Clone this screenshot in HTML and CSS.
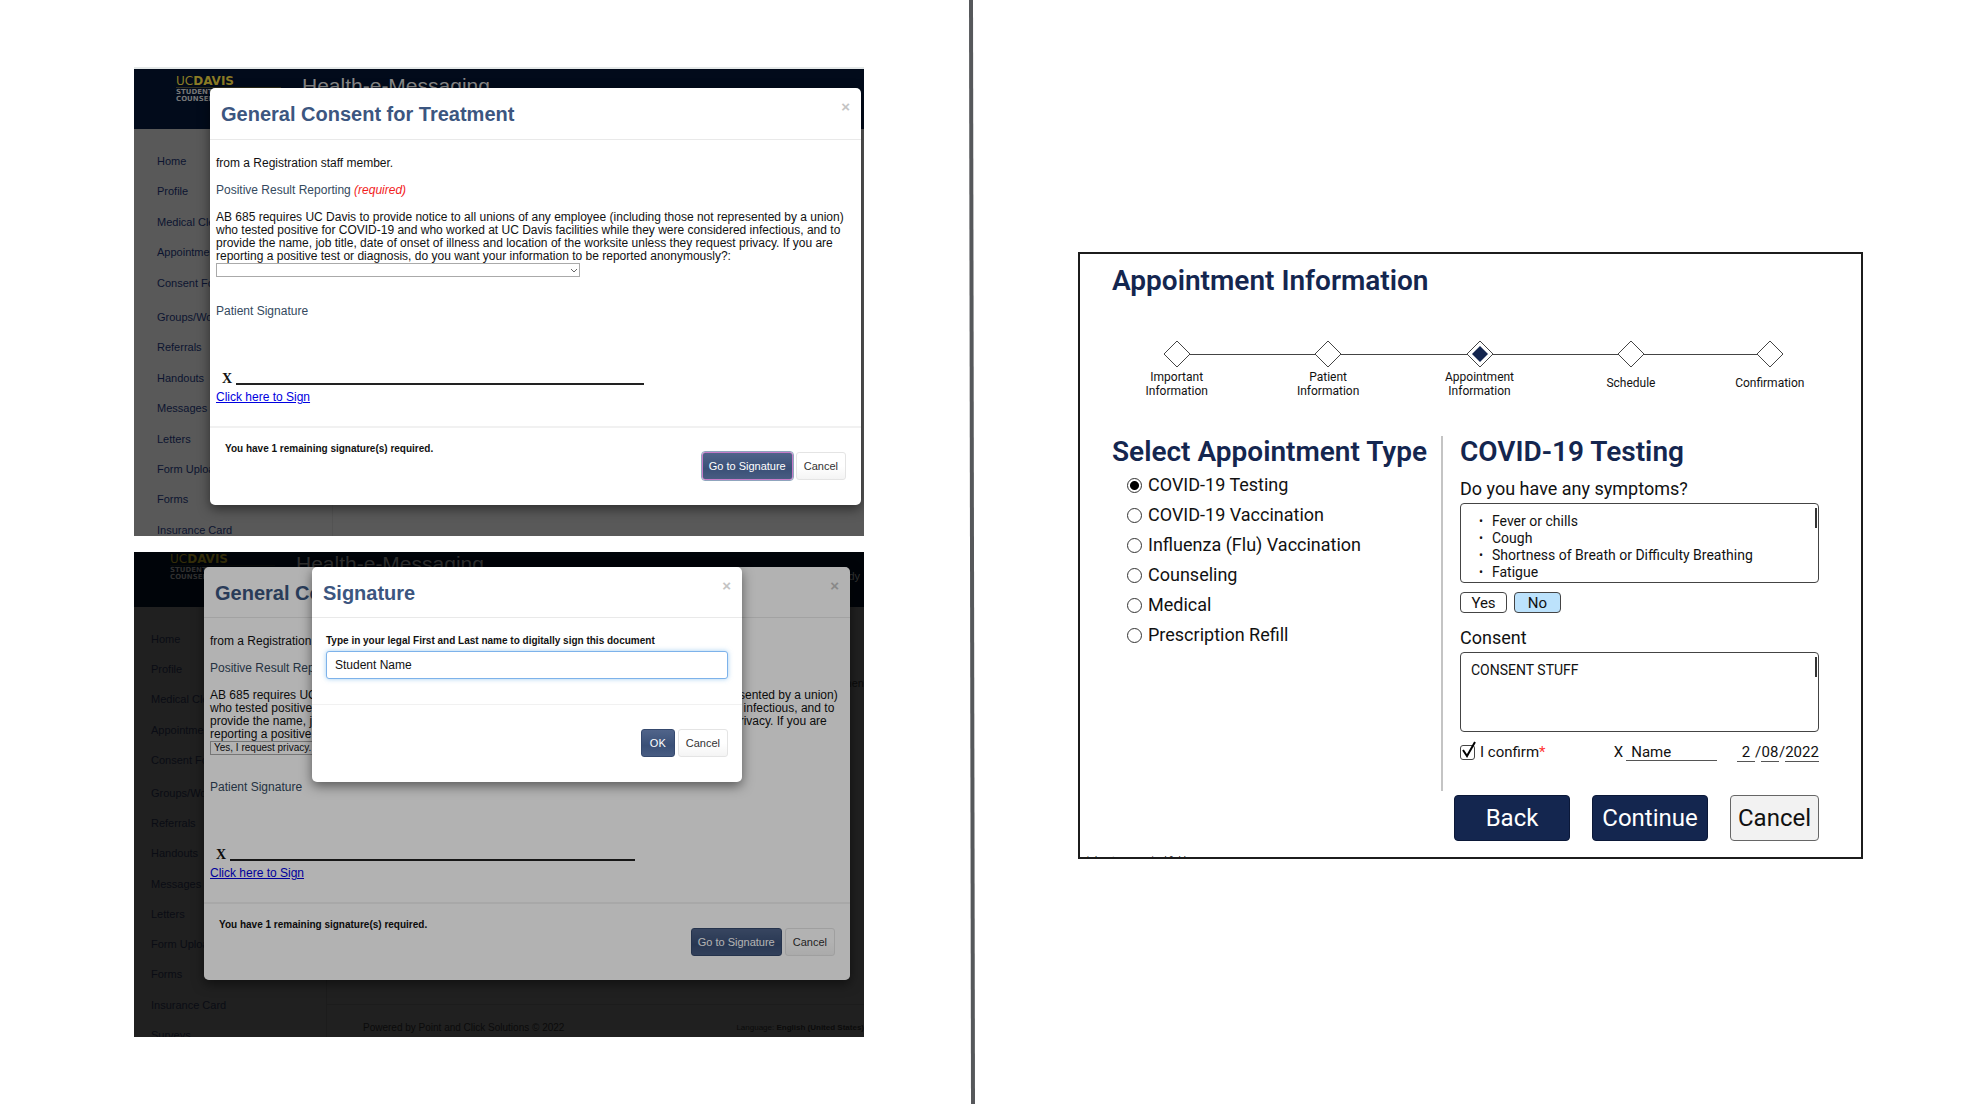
FILE: index.html
```html
<!DOCTYPE html>
<html lang="en">
<head>
<meta charset="utf-8">
<meta name="viewport" content="width=device-width, initial-scale=1">
<title>Appointment flow comparison</title>
<link rel="stylesheet" href="styles.css">
</head>
<body>
<main class="compare">
  <section class="before">

    <div class="shot">
      <div class="app">
        <header class="app-bar">
          <div class="logo"><div class="logo-name">UC<b>DAVIS</b></div><div class="logo-sub">STUDENT<br>COUNSEL</div></div>
          <div class="app-title">Health-e-Messaging</div>
        </header>
        <div class="app-body">
          <nav class="side">
            <ul class="side-top"><li>Home</li><li>Profile</li><li>Medical Clearances</li><li>Appointments</li><li>Consent Forms</li></ul>
            <ul class="side-more"><li>Groups/Workshops</li><li>Referrals</li><li>Handouts</li><li>Messages</li><li>Letters</li><li>Form Upload</li><li>Forms</li><li>Insurance Card</li></ul>
          </nav>
          <div class="app-content"></div>
        </div>
      </div>
      <div class="modal consent">
        <header class="modal-head"><h2>General Consent for Treatment</h2><button class="close" type="button" aria-label="Close">×</button></header>
        <div class="modal-body">
          <p>from a Registration staff member.</p>
          <p class="topic">Positive Result Reporting <em>(required)</em></p>
          <label for="anon1">AB 685 requires UC Davis to provide notice to all unions of any employee (including those not represented by a union)<br>who tested positive for COVID-19 and who worked at UC Davis facilities while they were considered infectious, and to<br>provide the name, job title, date of onset of illness and location of the worksite unless they request privacy. If you are<br>reporting a positive test or diagnosis, do you want your information to be reported anonymously?:</label>
          <div class="select"><select id="anon1"><option></option></select><svg viewBox="0 0 8 5"><path d="M1 1l3 3 3-3"/></svg></div>
          <p class="topic patient">Patient Signature</p>
          <div class="sign-line"><span>X</span><i></i></div>
          <a href="#sign">Click here to Sign</a>
        </div>
        <footer class="modal-foot"><strong>You have 1 remaining signature(s) required.</strong><div class="actions"><button class="btn primary focused" type="button">Go to Signature</button><button class="btn" type="button">Cancel</button></div></footer>
      </div>
    </div>

    <div class="shot dim">
      <div class="app">
        <header class="app-bar">
          <div class="logo"><div class="logo-name">UC<b>DAVIS</b></div><div class="logo-sub">STUDENT<br>COUNSEL</div></div>
          <div class="app-title">Health-e-Messaging</div>
          <div class="user">dy</div>
        </header>
        <div class="app-body">
          <nav class="side">
            <ul class="side-top"><li>Home</li><li>Profile</li><li>Medical Clearances</li><li>Appointments</li><li>Consent Forms</li></ul>
            <ul class="side-more"><li>Groups/Workshops</li><li>Referrals</li><li>Handouts</li><li>Messages</li><li>Letters</li><li>Form Upload</li><li>Forms</li><li>Insurance Card</li><li>Surveys</li></ul>
          </nav>
          <div class="app-content"><div class="app-tab">men</div><div class="app-foot"><span>Powered by Point and Click Solutions © 2022</span><span class="lang">Language: <b>English (United States)</b></span></div></div>
        </div>
      </div>
      <div class="modal consent">
        <header class="modal-head"><h2>General Consent for Treatment</h2><button class="close" type="button" aria-label="Close">×</button></header>
        <div class="modal-body">
          <p>from a Registration staff member.</p>
          <p class="topic">Positive Result Reporting <em>(required)</em></p>
          <label for="anon2">AB 685 requires UC Davis to provide notice to all unions of any employee (including those not represented by a union)<br>who tested positive for COVID-19 and who worked at UC Davis facilities while they were considered infectious, and to<br>provide the name, job title, date of onset of illness and location of the worksite unless they request privacy. If you are<br>reporting a positive test or diagnosis, do you want your information to be reported anonymously?:</label>
          <div class="select"><select id="anon2"><option>Yes, I request privacy. Please report anonymously.</option></select></div>
          <p class="topic patient">Patient Signature</p>
          <div class="sign-line"><span>X</span><i></i></div>
          <a href="#sign">Click here to Sign</a>
        </div>
        <footer class="modal-foot"><strong>You have 1 remaining signature(s) required.</strong><div class="actions"><button class="btn primary" type="button">Go to Signature</button><button class="btn" type="button">Cancel</button></div></footer>
        <div class="veil"></div>
      </div>
      <div class="modal signature">
        <header class="modal-head"><h2>Signature</h2><button class="close" type="button" aria-label="Close">×</button></header>
        <div class="modal-body">
          <label for="legal">Type in your legal First and Last name to digitally sign this document</label>
          <input id="legal" type="text" value="Student Name">
        </div>
        <footer class="modal-foot"><div class="actions"><button class="btn primary" type="button">OK</button><button class="btn" type="button">Cancel</button></div></footer>
      </div>
    </div>

  </section>

  <svg class="rule" viewBox="0 0 8 100" preserveAspectRatio="none"><polygon points="1,0 5,0 7,100 3,100"/></svg>

  <section class="after">
    <form class="card">
      <h1>Appointment Information</h1>
      <ol class="steps">
        <li><svg viewBox="0 0 28 28"><path d="M14 1L27 14 14 27 1 14z"/></svg><span>Important<br>Information</span></li>
        <li><svg viewBox="0 0 28 28"><path d="M14 1L27 14 14 27 1 14z"/></svg><span>Patient<br>Information</span></li>
        <li><svg viewBox="0 0 28 28"><path d="M14 1L27 14 14 27 1 14z"/><path class="fill" d="M14 6L22 14 14 22 6 14z"/></svg><span>Appointment<br>Information</span></li>
        <li class="single"><svg viewBox="0 0 28 28"><path d="M14 1L27 14 14 27 1 14z"/></svg><span>Schedule</span></li>
        <li class="single"><svg viewBox="0 0 28 28"><path d="M14 1L27 14 14 27 1 14z"/></svg><span>Confirmation</span></li>
      </ol>
      <div class="columns">
        <fieldset class="types">
          <legend>Select Appointment Type</legend>
          <label><input type="radio" name="type" checked>COVID-19 Testing</label>
          <label><input type="radio" name="type">COVID-19 Vaccination</label>
          <label><input type="radio" name="type">Influenza (Flu) Vaccination</label>
          <label><input type="radio" name="type">Counseling</label>
          <label><input type="radio" name="type">Medical</label>
          <label><input type="radio" name="type">Prescription Refill</label>
        </fieldset>
        <div class="detail">
          <h2>COVID-19 Testing</h2>
          <h3>Do you have any symptoms?</h3>
          <div class="box"><ul><li>Fever or chills</li><li>Cough</li><li>Shortness of Breath or Difficulty Breathing</li><li>Fatigue</li></ul></div>
          <div class="answers"><button type="button">Yes</button><button type="button" class="on">No</button></div>
          <h3>Consent</h3>
          <div class="box"><p>CONSENT STUFF</p></div>
          <div class="confirm">
            <label class="tick"><input type="checkbox" checked><svg viewBox="0 0 18 20"><path d="M3 10l4 6L15 2"/></svg><span>I confirm<em>*</em></span></label>
            <label class="name"><span>X</span><input type="text" value="Name"></label>
            <div class="date"><input type="text" aria-label="Month" value="2"><span>/</span><input type="text" aria-label="Day" value="08"><span>/</span><input class="year" type="text" aria-label="Year" value="2022"></div>
          </div>
        </div>
      </div>
      <div class="nav-buttons"><button type="button">Back</button><button type="button">Continue</button><button type="button" class="cancel">Cancel</button></div>
      <div class="note">* denotes a required field</div>
    </form>
  </section>
</main>
</body>
</html>
```
FILE: styles.css
```css
* { box-sizing: border-box; }
body { margin: 0; background: #fff; color: #111; font-family: "Liberation Sans", Arial, sans-serif; }
h1, h2, h3, p, ul, ol { margin: 0; padding: 0; }
ul, ol { list-style: none; }
button, input, select { font: inherit; color: inherit; }

.compare { display: grid; grid-template-columns: 968fr 8px 990fr; min-height: 100vh; }
.rule { width: 8px; height: 100%; fill: #56585b; }

/* Existing portal */
.before { display: flex; flex-direction: column; gap: 16px; padding: 67px 104px 66px 134px; }
.shot { position: relative; overflow: hidden; padding: 19px 3px 31px 76px; border-top: 2px solid #e4e8e8; font-size: 12px; line-height: 13px; }
.app { position: absolute; inset: 0; display: flex; flex-direction: column; background: #595959; color: #0c1430; }
.app-bar { position: relative; display: flex; flex: none; height: 60px; padding: 6px 0 0 42px; background: #020b1b; }
.logo { width: 126px; color: #8b7b25; }
.logo-name { width: 105px; border-bottom: 1px solid #2f2d1c; font: 12px/12px "DejaVu Sans", sans-serif; }
.logo-name b { font-weight: bold; }
.logo-sub { padding-top: 1px; color: #777; font: bold 7px/7px "DejaVu Sans", sans-serif; }
.app-title { color: #888; font-size: 21px; line-height: 22px; }
.user { position: absolute; right: 4px; top: 18px; font-size: 11px; color: #333; }
.app-body { flex: 1; display: grid; grid-template: minmax(0, 1fr) / 199px 1fr; min-height: 0; }
.side { padding: 17px 0 0 23px; border-right: 1px solid #535353; font-size: 11px; line-height: 30px; white-space: nowrap; }
.side ul { display: grid; grid-auto-rows: 1fr; }
.side-top { height: 152px; }
.side-more { height: 243px; margin-top: 4px; }
.app-content { display: flex; flex-direction: column; justify-content: space-between; min-width: 0; }

.modal { position: relative; background: #fff; border-radius: 5px; box-shadow: 0 4px 12px rgba(0, 0, 0, .5); }
.modal-head { display: flex; justify-content: space-between; height: 52px; padding: 14px 11px 0; border-bottom: 1px solid #e9e9e9; }
.modal-head h2 { color: #3c5680; font-size: 20px; line-height: 24px; }
.close { align-self: flex-start; padding: 0; border: 0; background: none; color: #c4c4c4; font-size: 15px; line-height: 10px; font-weight: bold; }
.modal-body { padding: 17px 6px 22px; color: #111; white-space: nowrap; }
.modal-body p { margin-bottom: 14px; }
.modal-body label { display: block; }
.modal-body .topic { color: #34495e; }
.topic em { color: #f21d1d; }
.select { position: relative; width: 57%; height: 14px; }
.select select { display: block; width: 100%; height: 14px; padding: 0 3px; border: 1px solid #aaa; border-radius: 0; background: transparent; appearance: none; font-size: 10px; line-height: 12px; }
.select svg { position: absolute; right: 2px; top: 5px; width: 8px; height: 5px; fill: none; stroke: #666; }
.modal-body .patient { margin: 28px 0 52px; }
.sign-line { display: flex; align-items: flex-end; gap: 4px; width: 67%; height: 18px; padding: 0 0 2px 6px; margin-bottom: 3px; font: bold 14px/14px "Liberation Serif", serif; }
.sign-line i { flex: 1; height: 2px; margin-bottom: 1px; background: #222; }
.modal-body a { color: #0000e0; }
.modal-foot { display: flex; justify-content: space-between; height: 79px; padding: 14px 15px 0; border-top: 2px solid #f1f1f1; font-size: 10px; }
.actions { display: flex; gap: 3px; margin: 10px 0 0 auto; }
.btn { height: 28px; padding: 0 6px; border: 1px solid #e4e4e4; border-radius: 3px; background: linear-gradient(#fff 50%, #f4f4f4); color: #333; font-size: 11px; white-space: nowrap; }
.btn:last-child { padding: 0 7px; }
.primary { border-color: #35496e; background: linear-gradient(#50648a, #3a5077 60%, #485c82); color: #fff; }
.focused { border-color: #c77bc8; outline: 1px solid #8fa5bd; }

.dim { padding: 15px 14px 57px 70px; border-top: 0; }
.dim .app { background: #202020; color: #0a0c14; }
.dim .app-bar { height: 55px; padding: 1px 0 0 36px; background: #000409; }
.dim .logo { color: #332c08; }
.dim .logo-name { border-color: #080a08; }
.dim .logo-sub, .dim .app-title { color: #303030; }
.dim .app-body { grid-template-columns: 193px 1fr; }
.dim .side { padding-left: 17px; border-color: #1c1c1c; }
.dim .side-top { height: 151px; }
.dim .side-more { height: 272px; margin-top: 3px; }
.app-tab { padding-top: 70px; color: #0b0b0b; font-size: 11px; text-align: right; }
.app-foot { display: flex; justify-content: space-between; height: 33px; padding: 16px 0 0 36px; border-top: 1px solid #1c1c1c; color: #0b0b0b; font-size: 10px; line-height: 14px; white-space: nowrap; }
.app-foot .lang { font-size: 8px; }
.dim .modal-head { height: 51px; }
.dim .consent .patient { margin: 26px 0 52px; }
.dim .consent .modal-foot { height: 78px; }
.veil { position: absolute; inset: 0; border-radius: 5px; background: rgba(0, 0, 0, .3); }
.signature { position: absolute; top: 15px; left: 178px; right: 122px; }
.signature .modal-body { padding: 16px 14px 25px; }
.signature label { margin-bottom: 4px; font-size: 10px; font-weight: bold; }
.signature input { display: block; width: 100%; height: 28px; padding: 0 8px; border: 1px solid #7db2ea; border-radius: 3px; outline: 0; box-shadow: 0 0 5px rgba(102, 175, 233, .6); font-size: 12px; }
.signature .modal-foot { height: 78px; padding: 14px 14px 0; border-top-width: 1px; }
.signature .primary { padding: 0 8px; }

/* Redesigned wizard */
.after { padding: 252px 103px 40px 102px; font-family: Roboto, sans-serif; }
.card { position: relative; overflow: hidden; border: 2px solid #1c1c1c; background: #fff; }
.card h1, .card h2, .card legend { color: #14264f; font-size: 28px; line-height: 32px; font-weight: 600; }
.card h1 { padding: 11px 32px 0; }
.steps { display: grid; grid-template-columns: repeat(4, 151fr) 126fr; padding: 43px 28px 0 21px; }
.steps li { position: relative; display: flex; flex-direction: column; align-items: center; font-size: 12px; line-height: 14px; text-align: center; }
.steps svg { width: 28px; height: 28px; fill: #fff; stroke: #444; }
.steps .fill { fill: #14264f; stroke: none; }
.steps li::after { content: ""; position: absolute; top: 14px; left: calc(50% + 13px); width: calc(100% - 26px); height: 1px; background: #444; }
.steps li:nth-child(4)::after { width: calc(100% - 38px); }
.steps li:last-child::after { display: none; }
.steps span { padding-top: 2px; }
.steps .single span { padding-top: 8px; }
.columns { display: grid; grid-template-columns: 361px 1fr; margin-top: 38px; }
.types { display: flex; flex-direction: column; margin: 0; padding: 2px 0 0 47px; border: 0; font-size: 18px; line-height: 30px; }
.types legend { margin-left: -15px; padding: 0; white-space: nowrap; }
.types label { display: flex; align-items: center; gap: 6px; }
.types input { appearance: none; width: 15px; height: 15px; margin: 0; border: 1px solid #333; border-radius: 50%; }
.types input:checked { background: radial-gradient(#000 0 4px, #fff 5px); }
.detail { padding: 0 42px 28px 17px; border-left: 2px solid #c4c4c4; }
.card h3 { font-size: 18px; line-height: 24px; font-weight: 400; }
.detail h2 { margin-bottom: 9px; }
.box { position: relative; height: 80px; margin-top: 2px; padding: 9px 10px; border: 1px solid #444; border-radius: 4px; font-size: 14px; line-height: 17px; }
.box::after { content: ""; position: absolute; top: 4px; right: 1px; width: 2px; height: 20px; background: #333; }
.box li { display: flex; gap: 8px; padding-left: 8px; }
.box li::before { content: "•"; width: 5px; font-size: 12px; }
.answers { display: flex; gap: 7px; margin: 9px 0 13px; }
.answers button { width: 47px; height: 21px; padding: 0; border: 1px solid #444; border-radius: 4px; background: #fff; font-size: 15px; line-height: 18px; }
.answers .on { background: #bce2fc; }
.confirm { display: flex; align-items: center; justify-content: space-between; margin-top: 9px; font-size: 15px; line-height: 20px; }
.confirm input[type=text] { height: 20px; padding: 0; border: 0; border-bottom: 1px solid #555; outline: 0; background: none; text-align: center; }
.tick { position: relative; display: flex; align-items: center; gap: 5px; width: 100px; }
.tick input { appearance: none; width: 15px; height: 15px; margin: 0; border: 1px solid #444; border-radius: 3px; }
.tick svg { position: absolute; left: 0; top: -2px; width: 18px; height: 20px; fill: none; stroke: #000; stroke-width: 2; }
.tick em { color: #f33; font-style: normal; }
.name { display: flex; gap: 3px; margin-left: 34px; font-size: 15px; line-height: 22px; }
.name input[type=text] { width: 91px; padding: 2px 0 0 5px; text-align: left; }
.date { display: flex; }
.date span { width: 6px; text-align: center; }
.date input { width: 18px; }
.date .year { width: 34px; }
.nav-buttons { display: grid; grid-template-columns: 116px 116px 89px; justify-content: end; gap: 22px; padding-right: 42px; margin-top: 4px; }
.nav-buttons button { height: 46px; padding: 0; border: 1px solid #0b1838; border-radius: 4px; background: #14264f; color: #fff; font-size: 24px; }
.nav-buttons .cancel { border-color: #666; background: #f2f2f2; color: #111; }
.note { height: 3px; margin: 13px 6px 0; overflow: hidden; font-size: 9px; line-height: 12px; }
```
